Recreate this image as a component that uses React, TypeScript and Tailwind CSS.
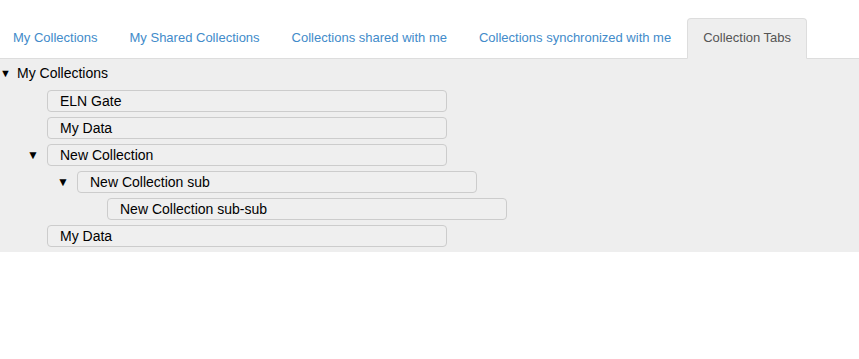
import React from 'react';

const tabs = [
  'My Collections',
  'My Shared Collections',
  'Collections shared with me',
  'Collections synchronized with me',
  'Collection Tabs',
];

interface Node {
  label: string;
  level: number;
  open?: boolean;
}

const nodes: Node[] = [
  { label: 'ELN Gate', level: 0 },
  { label: 'My Data', level: 0 },
  { label: 'New Collection', level: 0, open: true },
  { label: 'New Collection sub', level: 1, open: true },
  { label: 'New Collection sub-sub', level: 2 },
  { label: 'My Data', level: 0 },
];

const indents = ['ml-[47px]', 'ml-[77px]', 'ml-[107px]'];
const caretPos = ['left-[27px]', 'left-[57px]'];

export default function App() {
  const active = 4;
  return (
    <div className="w-[859px] h-[359px] bg-white font-['Liberation_Sans',Arial,sans-serif] overflow-hidden">
      {/* Tabs */}
      <ul className="flex pt-[18px] border-b border-[#ddd] -ml-[3px]">
        {tabs.map((t, i) => (
          <li key={t} className="-mb-px">
            <span
              className={
                i === active
                  ? 'block px-[15px] py-[10px] text-[13px] leading-[18.5px] text-[#555] bg-[#eee] border border-[#ddd] border-b-[#eee] rounded-t-[4px]'
                  : 'block px-[15px] py-[10px] text-[13px] leading-[18.5px] text-[#428bca] border border-transparent'
              }
            >
              {t}
            </span>
          </li>
        ))}
      </ul>

      {/* Tree */}
      <div className="bg-[#eee] pt-[5px] pb-[5px]">
        <div className="flex items-center h-[20px] text-[14px] text-black">
          <span className="w-[17px] text-[11px] leading-none">▼</span>
          <span>My Collections</span>
        </div>
        <div className="mt-[6px] flex flex-col gap-[5px]">
          {nodes.map((n, i) => (
            <div key={i} className="relative flex items-center">
              {n.open && (
                <span className={`absolute ${caretPos[n.level]} text-[12px] leading-none text-black`}>▼</span>
              )}
              <div
                className={`${indents[n.level]} w-[400px] h-[22px] border border-[#ccc] rounded-[4px] bg-[#efefef] pl-[12px] text-[14px] leading-[20px] text-black`}
              >
                {n.label}
              </div>
            </div>
          ))}
        </div>
      </div>
    </div>
  );
}
